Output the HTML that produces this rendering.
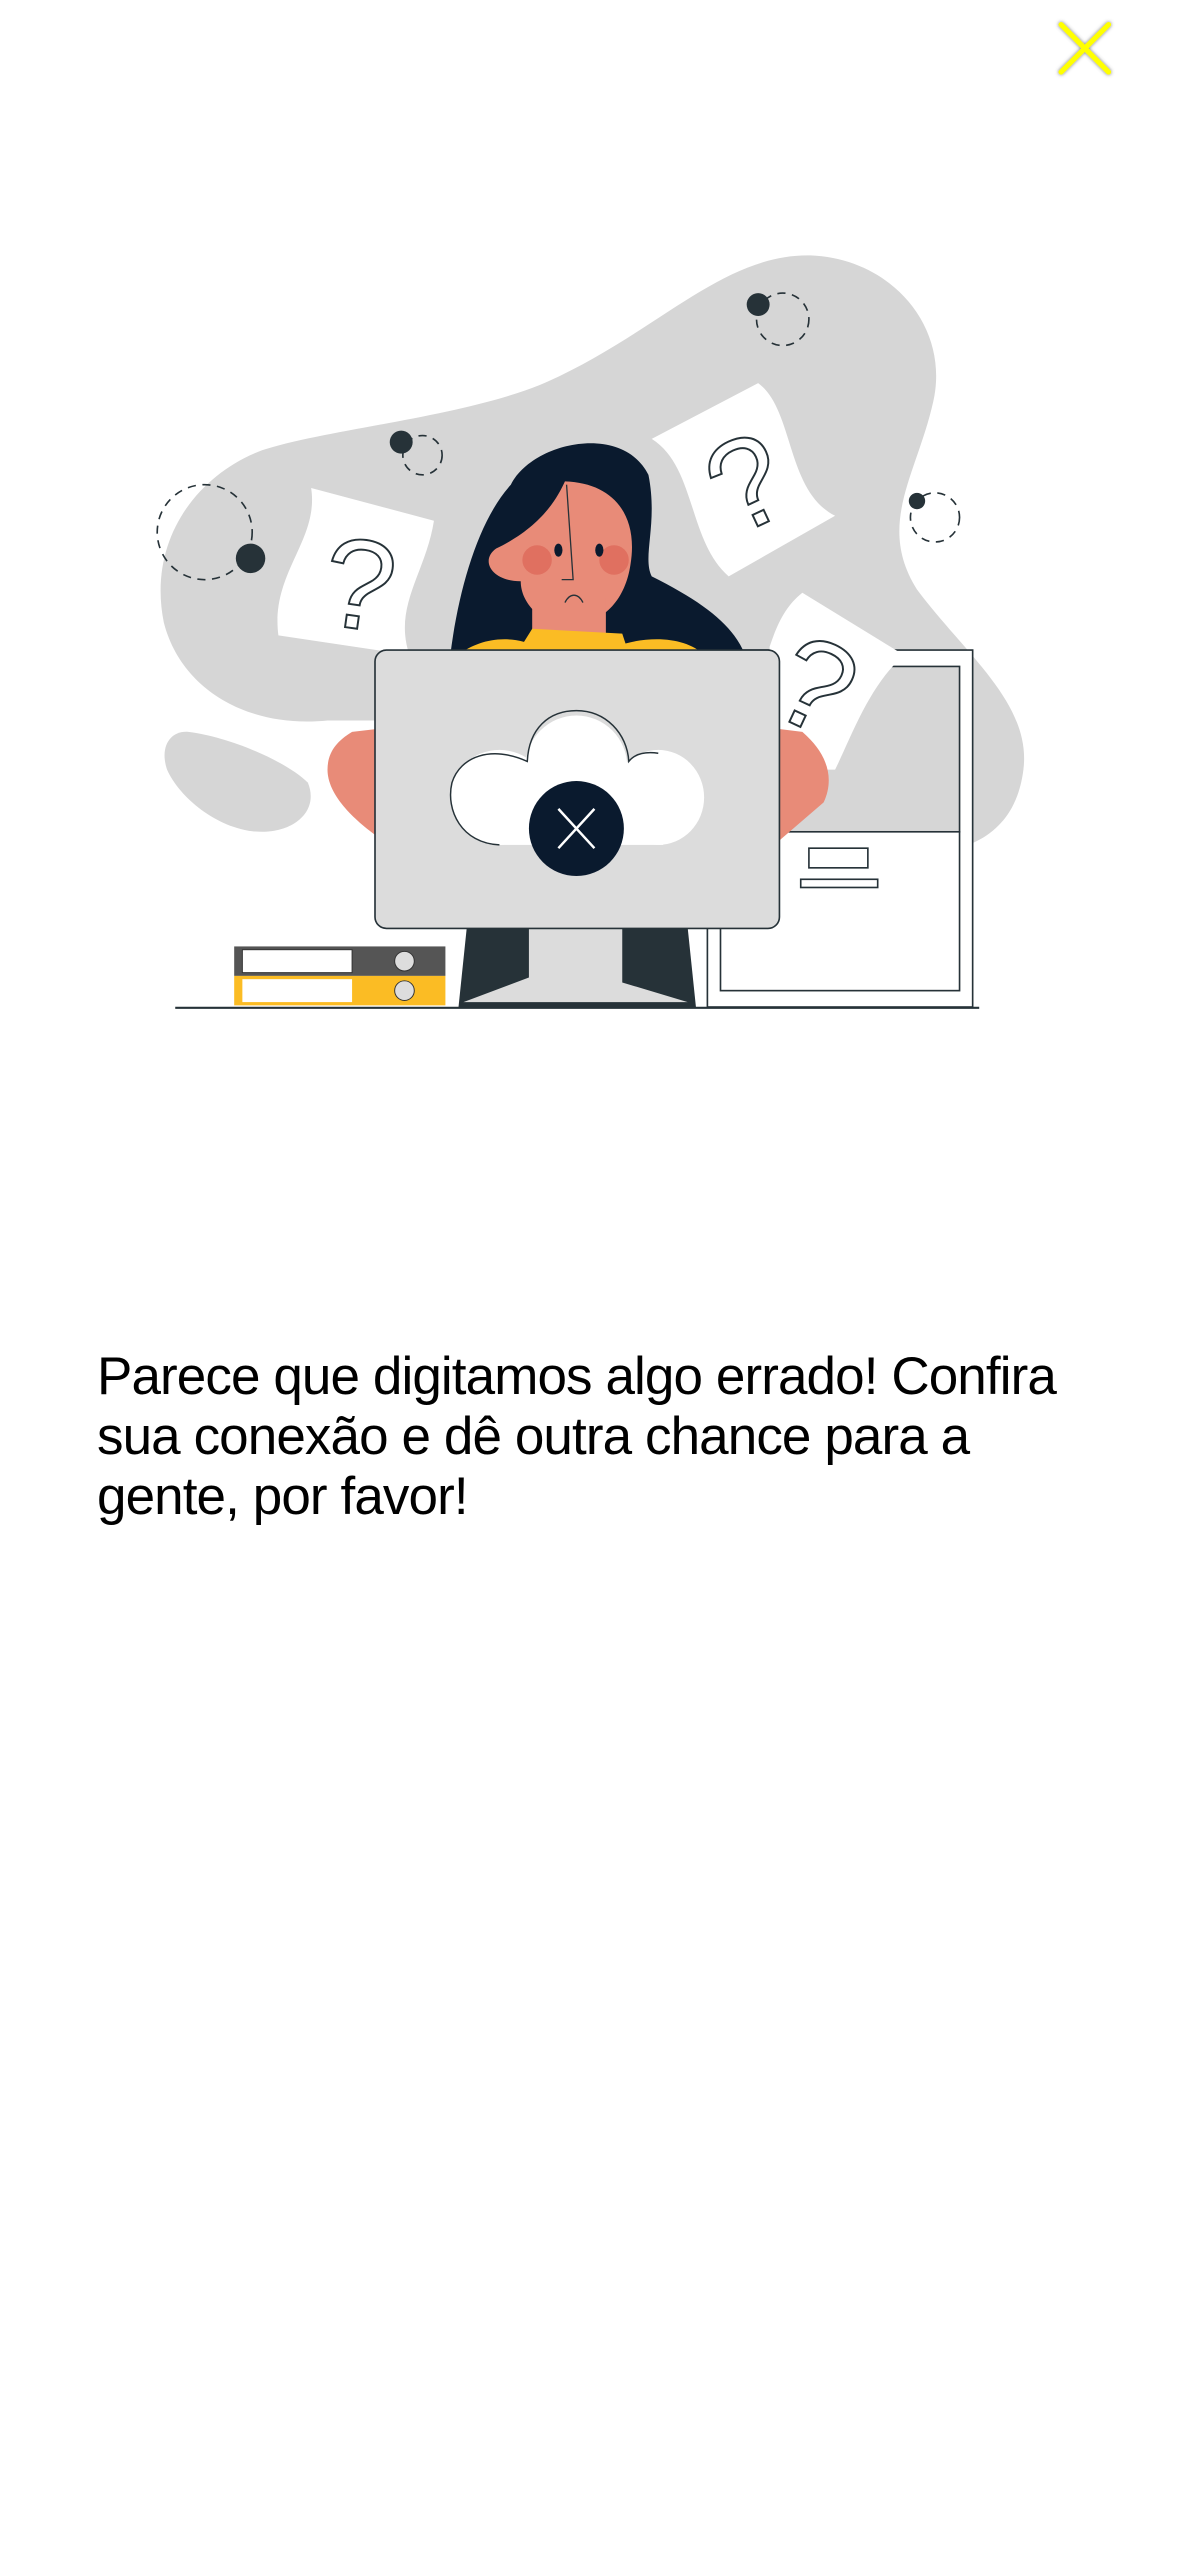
<!DOCTYPE html>
<html><head><meta charset="utf-8"><style>
html,body{margin:0;padding:0;background:#fff;}
body{width:1179px;height:2556px;position:relative;overflow:hidden;}
svg.ill{position:absolute;left:0;top:0;}
.txt{position:absolute;left:97px;top:1347px;width:985px;font-family:"Liberation Sans",sans-serif;font-size:53px;line-height:60px;color:#000;letter-spacing:-0.9px;}
</style></head><body>
<svg class="ill" width="1179" height="2556" viewBox="0 0 720 1561" xmlns="http://www.w3.org/2000/svg">
<defs><filter id="sh" x="-30%" y="-30%" width="160%" height="160%"><feDropShadow dx="0" dy="0" stdDeviation="1.2" flood-color="#555" flood-opacity="0.8"/></filter></defs>
<g filter="url(#sh)" stroke="#ffff00" stroke-width="3.2" stroke-linecap="round"><line x1="648" y1="15" x2="677" y2="44"/><line x1="677" y1="15" x2="648" y2="44"/></g>
<path fill="#d6d6d6" d="M495 156 C545 158 580 200 570 245 C560 290 535 320 560 360 C590 400 630 430 625 470 C620 510 590 525 540 522 L470 515 L470 440 L200 440 C150 445 110 420 100 380 C90 330 120 290 160 275 C200 262 280 255 330 235 C400 205 440 155 495 156 Z"/>
<path fill="#d6d6d6" d="M115 447 C140 450 175 465 188 478 C195 495 180 508 160 508 C135 508 110 488 102 470 C97 455 105 446 115 447 Z"/>
<g fill="none" stroke="#263238" stroke-width="1" stroke-dasharray="5 4">
<circle cx="125" cy="325" r="29"/><circle cx="258" cy="278" r="12"/><circle cx="478" cy="195" r="16"/><circle cx="571" cy="316" r="15"/></g>
<g fill="#263238"><circle cx="153" cy="341" r="9"/><circle cx="245" cy="270" r="7"/><circle cx="463" cy="186" r="7"/><circle cx="560" cy="306" r="5"/></g>
<rect x="432" y="397" width="162" height="218" fill="#fff" stroke="#263238" stroke-width="1"/>
<path d="M440 407 L586 407 L586 508 L440 508 Z" fill="#d6d6d6" stroke="#263238" stroke-width="1"/>
<rect x="440" y="508" width="146" height="97" fill="#fff" stroke="#263238" stroke-width="1"/>
<rect x="494" y="518" width="36" height="12" fill="#fff" stroke="#263238"/>
<rect x="489" y="537" width="47" height="5" fill="#fff" stroke="#263238"/>
<path fill="#fff" d="M190 298 L265 318 C260 350 240 370 250 400 L170 388 C165 350 195 330 190 298 Z"/>
<path fill="#fff" d="M398 268 L463 234 C485 250 480 300 510 315 L445 352 C420 330 425 285 398 268 Z"/>
<path fill="#fff" d="M490 362 L552 400 C530 420 520 450 510 470 L470 470 L470 395 C475 380 480 370 490 362 Z"/>
<g font-family="Liberation Sans,sans-serif" font-size="78" fill="#fff" stroke="#263238" stroke-width="1.2">
<text x="198" y="384" transform="rotate(8 220 355)">?</text>
<text x="433" y="322" transform="rotate(-25 455 292)">?</text>
<text x="478" y="446" transform="rotate(25 500 415)">?</text></g>
<path fill="#0a1a2e" d="M312 296 C325 270 380 258 396 290 C402 320 392 340 398 352 C430 368 448 382 455 400 L275 400 C280 360 292 318 312 296 Z"/>
<path fill="#e88b78" d="M345 294 C375 295 390 315 385 345 C382 365 370 380 350 382 C330 382 318 368 318 355 C300 355 293 342 303 335 C330 322 340 305 345 294 Z"/>
<rect x="325" y="365" width="45" height="25" fill="#e88b78"/>
<circle cx="328" cy="342" r="9" fill="#e07060"/><circle cx="375" cy="342" r="9" fill="#e07060"/>
<ellipse cx="341" cy="336" rx="2.5" ry="4" fill="#0a1a2e"/><ellipse cx="366" cy="336" rx="2.5" ry="4" fill="#0a1a2e"/>
<path d="M346 296 L350 354 L343 354 M345 368 C348 362 353 362 356 368" fill="none" stroke="#263238" stroke-width="0.8"/>
<path fill="#fbbc24" d="M280 400 C290 392 305 388 320 392 L325 384 L380 387 L382 393 C400 388 420 390 430 400 Z"/>
<path fill="#e88b78" d="M215 447 L232 445 L232 512 C215 500 200 485 200 470 C200 460 205 453 215 447 Z"/>
<path fill="#e88b78" d="M474 445 L490 447 C505 460 510 475 503 490 L474 515 Z"/>
<path fill="#263238" d="M285 567 L420 567 L425 615 L280 615 Z"/>
<path fill="#dcdcdc" d="M323 567 L380 567 L380 600 L420 612 L283 612 L323 597 Z"/>
<rect x="229" y="397" width="247" height="170" rx="7" fill="#dcdcdc" stroke="#263238" stroke-width="1"/>
<g fill="#fff"><circle cx="352" cy="468" r="31"/><ellipse cx="305" cy="487" rx="30" ry="29"/><ellipse cx="402" cy="487" rx="28" ry="29"/><rect x="300" y="470" width="105" height="46"/></g>
<path d="M305 516 C282 515 272 495 276 478 C281 462 300 455 322 465 C323 445 335 434 352 434 C370 434 383 448 384 465 C388 460 395 459 402 460" fill="none" stroke="#263238" stroke-width="0.9"/>
<circle cx="352" cy="506" r="29" fill="#0a1a2e"/>
<path d="M341 494 L363 518 M363 494 L341 518" stroke="#fff" stroke-width="1.5"/>
<rect x="143" y="578" width="129" height="18" fill="#555"/>
<rect x="143" y="596" width="129" height="18" fill="#fbbc24"/>
<rect x="148" y="580" width="67" height="14" fill="#fff" stroke="#333" stroke-width="0.6"/>
<rect x="148" y="598" width="67" height="14" fill="#fff"/>
<circle cx="247" cy="587" r="6" fill="#ddd" stroke="#333" stroke-width="0.6"/>
<circle cx="247" cy="605" r="6" fill="#ddd" stroke="#333" stroke-width="0.6"/>
<line x1="107" y1="615.5" x2="598" y2="615.5" stroke="#263238" stroke-width="1.3"/>
</svg>
<div class="txt">Parece que digitamos algo errado! Confira sua conexão e dê outra chance para a gente, por favor!</div>
</body></html>
